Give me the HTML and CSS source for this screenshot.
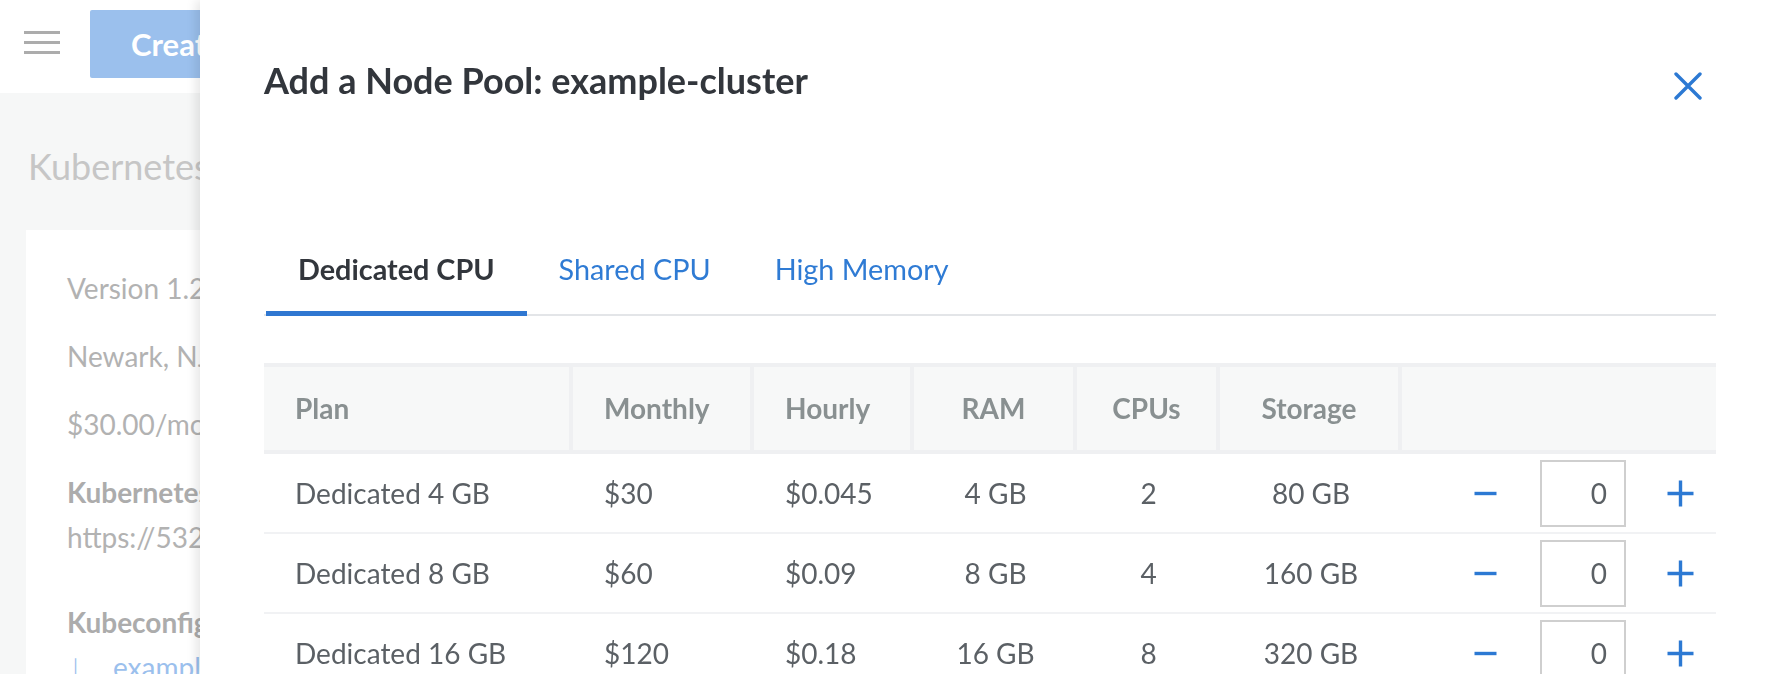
FILE: index.html
```html
<!DOCTYPE html>
<html lang="en">
<head>
<meta charset="utf-8">
<title>Add a Node Pool</title>
<link rel="stylesheet" href="styles.css">
</head>
<body>
<div class="app">
  <header class="topbar">
    <button class="burger" aria-label="Menu"><span></span><span></span><span></span></button>
    <button class="create-btn">Create Cluster</button>
  </header>
  <main class="content">
    <h1 class="page-title">Kubernetes Cluster</h1>
    <section class="card">
      <p class="line">Version 1.20</p>
      <p class="line">Newark, NJ</p>
      <p class="line">$30.00/month</p>
      <p class="label">Kubernetes API Endpoint:</p>
      <p class="value">https://532a1b2c.us-east.linodelke.net</p>
      <p class="label gap">Kubeconfig:</p>
      <p class="value link"><span class="arrow">↓</span>example-cluster-kubeconfig.yaml</p>
    </section>
  </main>
</div>

<aside class="drawer">
  <div class="drawer-head">
    <h2 class="drawer-title">Add a Node Pool: example-cluster</h2>
    <button class="close-btn" aria-label="Close">
      <svg width="28" height="28" viewBox="0 0 28 28"><path d="M2 2 L26 26 M26 2 L2 26" stroke="#2c79d3" stroke-width="3.4" stroke-linecap="round" fill="none"/></svg>
    </button>
  </div>

  <nav class="tabs">
    <span class="tab active">Dedicated CPU</span>
    <span class="tab">Shared CPU</span>
    <span class="tab">High Memory</span>
  </nav>

  <table class="plans">
    <colgroup>
      <col class="c-plan"><col class="c-month"><col class="c-hour"><col class="c-ram"><col class="c-cpu"><col class="c-storage"><col class="c-qty">
    </colgroup>
    <thead>
      <tr>
        <th class="left">Plan</th>
        <th class="left">Monthly</th>
        <th class="left">Hourly</th>
        <th>RAM</th>
        <th>CPUs</th>
        <th>Storage</th>
        <th class="last"></th>
      </tr>
    </thead>
    <tbody>
      <tr>
        <td class="left">Dedicated 4 GB</td><td class="left">$30</td><td class="left">$0.045</td><td>4 GB</td><td>2</td><td>80 GB</td>
        <td class="qty"><div class="stepper"><button class="step" aria-label="Decrease"><svg width="27" height="27" viewBox="0 0 27 27"><path d="M2.5 13.5 H24.5" stroke="#2c79d3" stroke-width="3.4" fill="none"/></svg></button><input class="count" value="0"><button class="step" aria-label="Increase"><svg width="27" height="27" viewBox="0 0 27 27"><path d="M0.5 13.5 H26.5 M13.5 0.5 V26.5" stroke="#2c79d3" stroke-width="3.4" fill="none"/></svg></button></div></td>
      </tr>
      <tr>
        <td class="left">Dedicated 8 GB</td><td class="left">$60</td><td class="left">$0.09</td><td>8 GB</td><td>4</td><td>160 GB</td>
        <td class="qty"><div class="stepper"><button class="step" aria-label="Decrease"><svg width="27" height="27" viewBox="0 0 27 27"><path d="M2.5 13.5 H24.5" stroke="#2c79d3" stroke-width="3.4" fill="none"/></svg></button><input class="count" value="0"><button class="step" aria-label="Increase"><svg width="27" height="27" viewBox="0 0 27 27"><path d="M0.5 13.5 H26.5 M13.5 0.5 V26.5" stroke="#2c79d3" stroke-width="3.4" fill="none"/></svg></button></div></td>
      </tr>
      <tr>
        <td class="left">Dedicated 16 GB</td><td class="left">$120</td><td class="left">$0.18</td><td>16 GB</td><td>8</td><td>320 GB</td>
        <td class="qty"><div class="stepper"><button class="step" aria-label="Decrease"><svg width="27" height="27" viewBox="0 0 27 27"><path d="M2.5 13.5 H24.5" stroke="#2c79d3" stroke-width="3.4" fill="none"/></svg></button><input class="count" value="0"><button class="step" aria-label="Increase"><svg width="27" height="27" viewBox="0 0 27 27"><path d="M0.5 13.5 H26.5 M13.5 0.5 V26.5" stroke="#2c79d3" stroke-width="3.4" fill="none"/></svg></button></div></td>
      </tr>
      <tr>
        <td class="left">Dedicated 32 GB</td><td class="left">$240</td><td class="left">$0.36</td><td>32 GB</td><td>16</td><td>640 GB</td>
        <td class="qty"><div class="stepper"><button class="step" aria-label="Decrease"><svg width="27" height="27" viewBox="0 0 27 27"><path d="M2.5 13.5 H24.5" stroke="#2c79d3" stroke-width="3.4" fill="none"/></svg></button><input class="count" value="0"><button class="step" aria-label="Increase"><svg width="27" height="27" viewBox="0 0 27 27"><path d="M0.5 13.5 H26.5 M13.5 0.5 V26.5" stroke="#2c79d3" stroke-width="3.4" fill="none"/></svg></button></div></td>
      </tr>
    </tbody>
  </table>
</aside>
</body>
</html>
```

FILE: styles.css
```css
* { box-sizing: border-box; }
html, body {
  margin: 0;
  padding: 0;
  height: 100%;
  overflow: hidden;
}
body {
  font-family: Lato, "Noto Sans", sans-serif;
  background: #f6f7f7;
  width: 1770px;
  height: 674px;
}
button { font-family: inherit; }

.app { width: 1770px; }

.topbar {
  height: 93px;
  background: #ffffff;
  display: flex;
  align-items: flex-start;
  padding-left: 24px;
}
.burger {
  margin-top: 31px;
  width: 36px;
  padding: 0;
  border: 0;
  background: none;
  display: flex;
  flex-direction: column;
  gap: 7px;
}
.burger span {
  display: block;
  width: 36px;
  height: 3px;
  background: #acacac;
}
.create-btn {
  margin-top: 10px;
  margin-left: 30px;
  height: 68px;
  padding: 0 41px;
  border: 0;
  border-radius: 2px;
  background: #9bc0ed;
  color: #ffffff;
  font-size: 31px;
  font-weight: 700;
  white-space: nowrap;
}

.content { padding: 0 26px; }
.page-title {
  margin: 0;
  padding-top: 53px;
  height: 137px;
  font-size: 36px;
  line-height: 40px;
  font-weight: 400;
  color: #c6c6c6;
  padding-left: 2px;
  white-space: nowrap;
}
.card {
  background: #ffffff;
  width: 600px;
  height: 460px;
  padding: 24px 0 0 41px;
}
.card p {
  margin: 0;
  font-size: 28px;
  color: #b2b2b2;
  white-space: nowrap;
}
.card .line { line-height: 68px; }
.card .label { line-height: 45px; margin-top: 12px; font-weight: 700; color: #acacac; }
.card .label.gap { margin-top: 40px; }
.card .value { line-height: 45px; }
.card .link { color: #9bc0ed; }
.card .arrow { display: inline-block; width: 48px; padding-left: 0; margin-left: -2px; font-weight: 300; }

/* Drawer */
.drawer {
  position: fixed;
  top: 0;
  left: 200px;
  width: 1570px;
  height: 674px;
  background: #ffffff;
  box-shadow: -4px 0 10px rgba(0, 0, 0, 0.10);
  padding: 58px 54px 0 64px;
  overflow: hidden;
}
.drawer-head {
  display: flex;
  align-items: flex-start;
  justify-content: space-between;
}
.drawer-title {
  margin: 0;
  font-size: 36px;
  line-height: 44px;
  font-weight: 700;
  color: #32363c;
}
.close-btn {
  margin-top: 14px;
  margin-right: 14px;
  width: 28px;
  height: 28px;
  padding: 0;
  border: 0;
  background: none;
}
.close-btn svg { display: block; }

.tabs {
  margin-top: 147px;
  display: flex;
  border-bottom: 2px solid #e3e5e8;
}
.tab {
  padding: 0 32px 22px;
  font-size: 28.8px;
  line-height: 40px;
  color: #2f7bd4;
  margin-bottom: -2px;
  border-bottom: 5px solid transparent;
}
.tab.active {
  margin-left: 2px;
  font-weight: 700;
  color: #32363c;
  border-bottom-color: #2f77d1;
}

.plans {
  margin-top: 47px;
  width: 1452px;
  table-layout: fixed;
  border-collapse: separate;
  border-spacing: 0;
  font-size: 28px;
}
.c-plan { width: 309px; }
.c-month { width: 181px; }
.c-hour { width: 160px; }
.c-ram { width: 163px; }
.c-cpu { width: 143px; }
.c-storage { width: 182px; }
.c-qty { width: 314px; }

.plans th {
  background: #f7f8f8;
  border-top: 4px solid #eff0f2;
  border-bottom: 4px solid #eff0f2;
  border-right: 4px solid #eff0f2;
  height: 91px;
  padding: 0;
  line-height: 83px;
  font-weight: 700;
  color: #899091;
  text-align: center;
}
.plans th.last { border-right: 0; }
.plans th.left, .plans td.left {
  text-align: left;
  padding-left: 31px;
}

.plans td {
  height: 80px;
  padding: 0;
  line-height: 78px;
  border-bottom: 2px solid #f1f2f4;
  color: #5b6065;
  text-align: center;
  white-space: nowrap;
}
.plans td.qty { padding-right: 22px; }
.stepper {
  display: flex;
  justify-content: flex-end;
  align-items: center;
  gap: 41px;
}
.step {
  width: 27px;
  height: 27px;
  padding: 0;
  border: 0;
  background: none;
}
.step svg { display: block; }
.count {
  width: 86px;
  height: 67px;
  border: 2px solid #cfcfcf;
  padding: 0 17px 0 0;
  text-align: right;
  font-family: inherit;
  font-size: 28px;
  color: #5b6065;
  background: #fff;
}
```
